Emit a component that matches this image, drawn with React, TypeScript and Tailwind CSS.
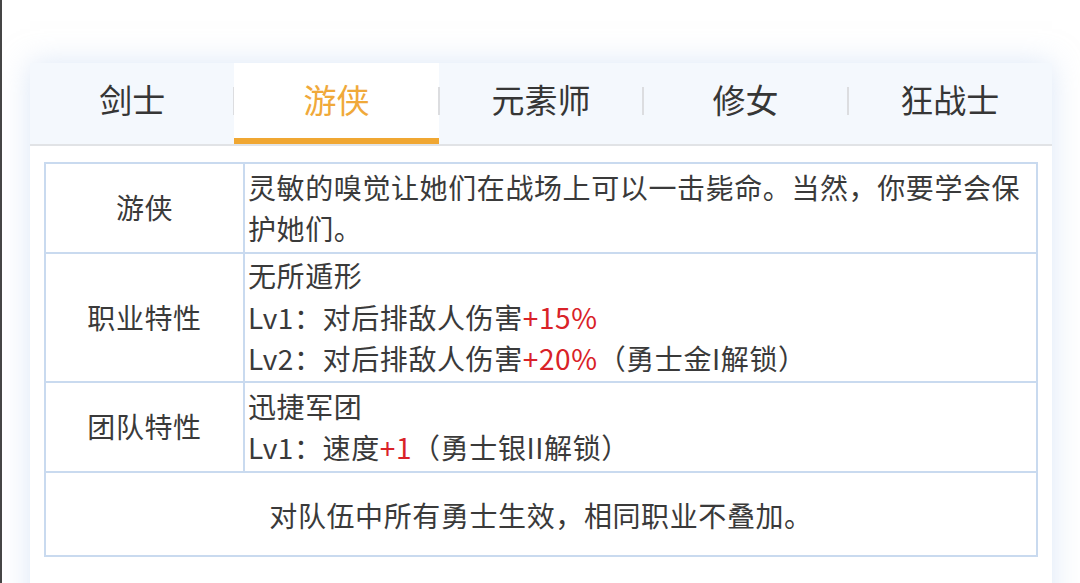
import React from "react";

const tabs = ["剑士", "游侠", "元素师", "修女", "狂战士"];
const font = { fontFamily: '"Noto Sans CJK SC", "Noto Sans", sans-serif' };

export default function App() {
  return (
    <div
      className="w-[1080px] h-[583px] overflow-hidden bg-white border-l-2 border-[#454545] pl-[28px] pr-[28px] pt-[63px]"
      style={font}
    >
      <div className="bg-white h-[600px] shadow-[0_0_28px_rgba(185,208,240,0.5)]">
        <div className="flex h-[83px] bg-[#f4f8fd] border-b-2 border-[#e1e3e6]">
          {tabs.map((t, i) => {
            const active = i === 1;
            return (
              <div
                key={t}
                className={
                  "relative flex-1 flex items-center justify-center text-[33px] " +
                  (active ? "bg-white text-[#f0a93a]" : "text-[#363636]")
                }
              >
                <span className="-mt-[8px]">{t}</span>
                {active && (
                  <div className="absolute left-0 right-0 bottom-0 h-[6px] bg-[#f0a732]" />
                )}
                {i < 4 && (
                  <div className="absolute right-[-1px] top-[24px] h-[28px] w-[2px] bg-[#dcdde0]" />
                )}
              </div>
            );
          })}
        </div>
        <div className="mx-[14px] mt-[16px] border-2 border-[#c9daef] text-[28px] leading-[41.5px] tracking-[0.6px] text-[#3a3a3a]">
          <div className="flex h-[90px] border-b-2 border-[#c9daef]">
            <div className="w-[199px] shrink-0 border-r-2 border-[#c9daef] flex items-center justify-center">
              游侠
            </div>
            <div className="flex-1 pl-[3px] flex flex-col justify-center">
              <div>灵敏的嗅觉让她们在战场上可以一击毙命。当然，你要学会保</div>
              <div>护她们。</div>
            </div>
          </div>
          <div className="flex h-[129px] border-b-2 border-[#c9daef]">
            <div className="w-[199px] shrink-0 border-r-2 border-[#c9daef] flex items-center justify-center">
              职业特性
            </div>
            <div className="flex-1 pl-[3px] flex flex-col justify-center">
              <div>无所遁形</div>
              <div>
                Lv1：对后排敌人伤害<span className="text-[#d92228]">+15%</span>
              </div>
              <div>
                Lv2：对后排敌人伤害<span className="text-[#d92228]">+20%</span>（勇士金I解锁）
              </div>
            </div>
          </div>
          <div className="flex h-[90px] border-b-2 border-[#c9daef]">
            <div className="w-[199px] shrink-0 border-r-2 border-[#c9daef] flex items-center justify-center">
              团队特性
            </div>
            <div className="flex-1 pl-[3px] flex flex-col justify-center">
              <div>迅捷军团</div>
              <div>
                Lv1：速度<span className="text-[#d92228]">+1</span>（勇士银II解锁）
              </div>
            </div>
          </div>
          <div className="h-[82px] flex items-center justify-center pt-[4px]">
            对队伍中所有勇士生效，相同职业不叠加。
          </div>
        </div>
      </div>
    </div>
  );
}
